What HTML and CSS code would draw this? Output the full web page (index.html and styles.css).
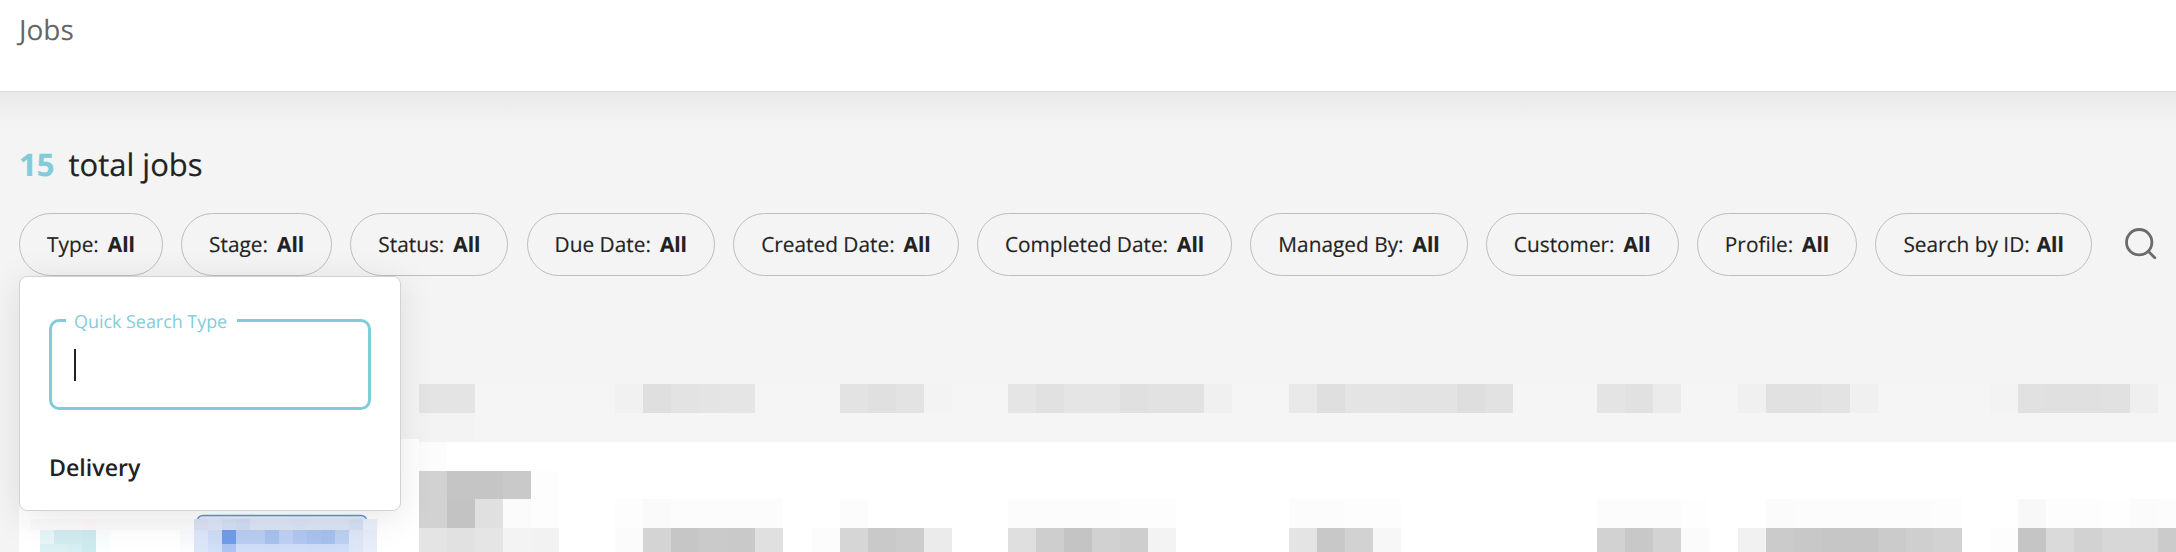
FILE: index.html
```html
<!DOCTYPE html>
<html lang="en">
<head>
<meta charset="utf-8">
<title>Jobs</title>
<link rel="stylesheet" href="styles.css">
</head>
<body>
<header class="topbar"><h1 class="title">Jobs</h1></header>
<main class="content">
<h2 class="total"><span class="count">15</span><span>total jobs</span></h2>
<div class="filters">
<button class="pill">Type:<b>All</b></button>
<button class="pill">Stage:<b>All</b></button>
<button class="pill">Status:<b>All</b></button>
<button class="pill">Due Date:<b>All</b></button>
<button class="pill">Created Date:<b>All</b></button>
<button class="pill">Completed Date:<b>All</b></button>
<button class="pill">Managed By:<b>All</b></button>
<button class="pill">Customer:<b>All</b></button>
<button class="pill">Profile:<b>All</b></button>
<button class="pill pill-tight">Search by ID:<b>All</b></button>
<svg class="search" viewBox="0 0 32 32"><circle cx="14.2" cy="14.2" r="12.7"/><path d="M23.5 23.5l6.3 6.3"/></svg>
</div>
<svg class="table" id="table" viewBox="0 0 2176 180" shape-rendering="crispEdges"></svg>
<section class="dropdown">
<fieldset class="field"><legend>Quick Search Type</legend><div class="caret"></div></fieldset>
<div class="option">Delivery</div>
</section>
</main>
<script src="table.js"></script>
</body>
</html>
```
FILE: styles.css
```css
* { box-sizing: border-box; }
body { margin: 0; width: 2176px; height: 552px; overflow: hidden; background: #f4f4f4; color: #222; font-family: "Open Sans", sans-serif; text-rendering: geometricPrecision; }
.topbar { height: 92px; padding: 11px 0 0 19px; background: #fff; border-bottom: 1px solid #dadada; }
.title { margin: 0; font-size: 28px; line-height: 39px; font-weight: 400; color: #666; }
.content { position: relative; height: 460px; overflow: hidden; background: linear-gradient(#e9e9e9, #eee 14px, #f2f2f2 28px, #f4f4f4 44px); }
.total { display: flex; gap: 14px; height: 121px; margin: 0; padding: 53px 0 0 19px; font-size: 31px; line-height: 40px; font-weight: 400; -webkit-text-stroke: .2px; }
.count { font-weight: 700; color: #80cdd9; }
.filters { display: flex; gap: 18.2px; height: 63px; padding-left: 19px; align-items: center; }
.pill { display: flex; flex: none; align-items: center; gap: 9px; height: 63px; padding: 0 27px; border: 1px solid #bdbdbd; border-radius: 32px; background: transparent; font: 500 20.84px/30px "Open Sans", sans-serif; color: #222; white-space: nowrap; text-rendering: geometricPrecision; -webkit-text-stroke: .15px; }
.pill-tight { gap: 7px; }
.search { width: 32px; height: 32px; margin: 0 0 1px 15px; fill: none; stroke: #6b6b6b; stroke-width: 2.8; stroke-linecap: round; }
.table { display: block; width: 2176px; height: 180px; margin-top: 96px; }
.dropdown { position: absolute; left: 19px; top: 184px; width: 382px; height: 235px; padding: 34px 29px 0; border: 1px solid #d2d2d2; border-radius: 8px; background: #fff; box-shadow: 0 6px 36px rgba(0, 0, 0, .1); }
.field { height: 99px; margin: 0; padding: 0 22px; border: 3px solid #80cdd9; border-radius: 10px; }
.field legend { position: relative; top: 2px; margin-left: -8px; padding: 0 10px 0 8px; color: #80cdd9; font-size: 17.9px; line-height: 18px; }
.caret { width: 2px; height: 32px; margin-top: 20px; background: #222; }
.option { margin-top: 40px; font-size: 23.2px; line-height: 34px; font-weight: 600; }
```
FILE: table.js
```js
// Obscured table cells: x, y, width, height, colour
const svg = document.getElementById('table');
function block(x, y, w, h, fill) {
  const r = document.createElementNS('http://www.w3.org/2000/svg', 'rect');
  for (const [k, v] of Object.entries({ x, y, width: w, height: h, fill })) r.setAttribute(k, v);
  svg.append(r);
}
const X = 418.7, P = 28.06;
function row(y, h, start, colours) {
  colours.split(' ').forEach((c, i) => {
    const a = Math.round(X + (start + i) * P), b = Math.round(X + (start + i + 1) * P);
    if (c !== '-') block(a, y, b - a, h, '#' + c);
  });
}
block(19, 67, 400, 113, '#fff');
block(419, 70, 1757, 110, '#fff');
block(447, 12, 1729, 58, '#f5f5f5');
row(12, 29, 0, 'e4e4e4 e4e4e4');
row(12, 29, 7, 'f1f1f1 dfdfdf e3e3e3 e4e4e4 e5e5e5');
row(12, 29, 15, 'e3e3e3 e0e0e0 e3e3e3 f3f3f3');
row(12, 29, 21, 'e5e5e5 e1e1e1 e5e5e5 e5e5e5 e0e0e0 e2e2e2 e2e2e2 f0f0f0');
row(12, 29, 31, 'e9e9e9 dfdfdf e4e4e4 e4e4e4 e3e3e3 e3e3e3 dedede e2e2e2');
row(12, 29, 42, 'e4e4e4 e1e1e1 ebebeb');
row(12, 29, 47, 'f0f0f0 e1e1e1 e1e1e1 e3e3e3 f0f0f0');
row(12, 29, 56, 'f3f3f3 e1e1e1 e0e0e0 e0e0e0 e1e1e1 efefef');
row(41, 29, 0, 'f3f3f3 f3f3f3');
row(70, 29, 0, 'fcfcfc');
row(99, 28, 0, 'd2d2d2 c5c5c5 c5c5c5 c9c9c9 fdfdfd');
row(127, 29, 0, 'd2d2d2 c3c3c3 e0e0e0 fbfbfb fdfdfd');
row(127, 29, 7, 'fdfdfd fafafa fcfcfc fcfcfc fcfcfc fcfcfc');
row(127, 29, 15, 'fcfcfc');
row(127, 29, 21, 'fcfcfc fcfcfc fcfcfc fcfcfc fdfdfd fdfdfd');
row(127, 29, 31, 'fcfcfc fcfcfc fdfdfd fdfdfd');
row(127, 29, 42, 'fcfcfc fcfcfc fcfcfc fefefe');
row(127, 29, 48, 'fbfbfb fcfcfc fcfcfc fcfcfc fcfcfc fcfcfc fdfdfd');
row(127, 29, 57, 'f8f8f8 fdfdfd fdfdfd fefefe fbfbfb fcfcfc');
row(156, 24, 0, 'e4e4e4 e1e1e1 e5e5e5 f3f3f3 f2f2f2');
row(156, 24, 7, 'fbfbfb d4d4d4 c6c6c6 cacaca c9c9c9 e0e0e0');
row(156, 24, 14, 'fcfcfc d6d6d6 c9c9c9 cccccc ebebeb');
row(156, 24, 21, 'dfdfdf cecece c4c4c4 d1d1d1 cecece f3f3f3');
row(156, 24, 31, 'e4e4e4 c8c8c8 d2d2d2 f7f7f7');
row(156, 24, 42, 'd2d2d2 c8c8c8 d3d3d3 fbfbfb');
row(156, 24, 47, 'f1f1f1 cbcbcb c8c8c8 c6c6c6 c6c6c6 cbcbcb cfcfcf d2d2d2');
row(156, 24, 56, 'fdfdfd c5c5c5 dadada d2d2d2 d7d7d7 d7d7d7 cbcbcb');
// Status badge outline
const badge = document.createElementNS('http://www.w3.org/2000/svg', 'path');
badge.setAttribute('d', 'M197 149Q198 143.5 203 143.5H361Q366 143.5 367 149');
badge.setAttribute('fill', '#e2e8f5');
badge.setAttribute('stroke', '#648ee0');
badge.setAttribute('stroke-width', '1.3');
badge.setAttribute('shape-rendering', 'auto');
svg.append(badge);
function small(x, y, h, colours) {
  colours.split(' ').forEach((c, i) => {
    const a = Math.round(x + i * 14.04), b = Math.round(x + (i + 1) * 14.04);
    block(a, y, b - a, h, '#' + c);
  });
}
block(30, 147, 348, 11, '#fbfbfb');
block(82, 147, 14, 11, '#fff8fa');
small(40, 158, 14, 'e6f5f7 d2ebef d2ebef cdeaee f8fdfd');
small(40, 172, 8, 'daf0f3 daf0f3 d6eff2 cdeaee fbfefe');
small(194.3, 147, 11, 'd9e2f3 dbe5f7 d4dff4 cfdcf4 dbe4f5 dbe4f5 dbe4f5 d9e3f6 dbe4f5 dbe4f5 dbe4f5 d5e0f4 eaf0fc');
small(180.3, 158, 14, 'f8fafe dde6f8 cfdcf7 709ce8 b9cdf1 b9cdf1 a7c1ef bdd0f3 b1c7f1 aac2ef a6c0ee bcd0f2 dde7f8 e7edf9');
small(180.3, 172, 8, 'fbfcfe dbe5f8 d2dff8 adc4f2 d0ddf8 d0ddf8 cedcf8 d0ddf8 d0ddf8 cedcf8 cedcf8 d0ddf8 dde7f8 e7edf9');
```
